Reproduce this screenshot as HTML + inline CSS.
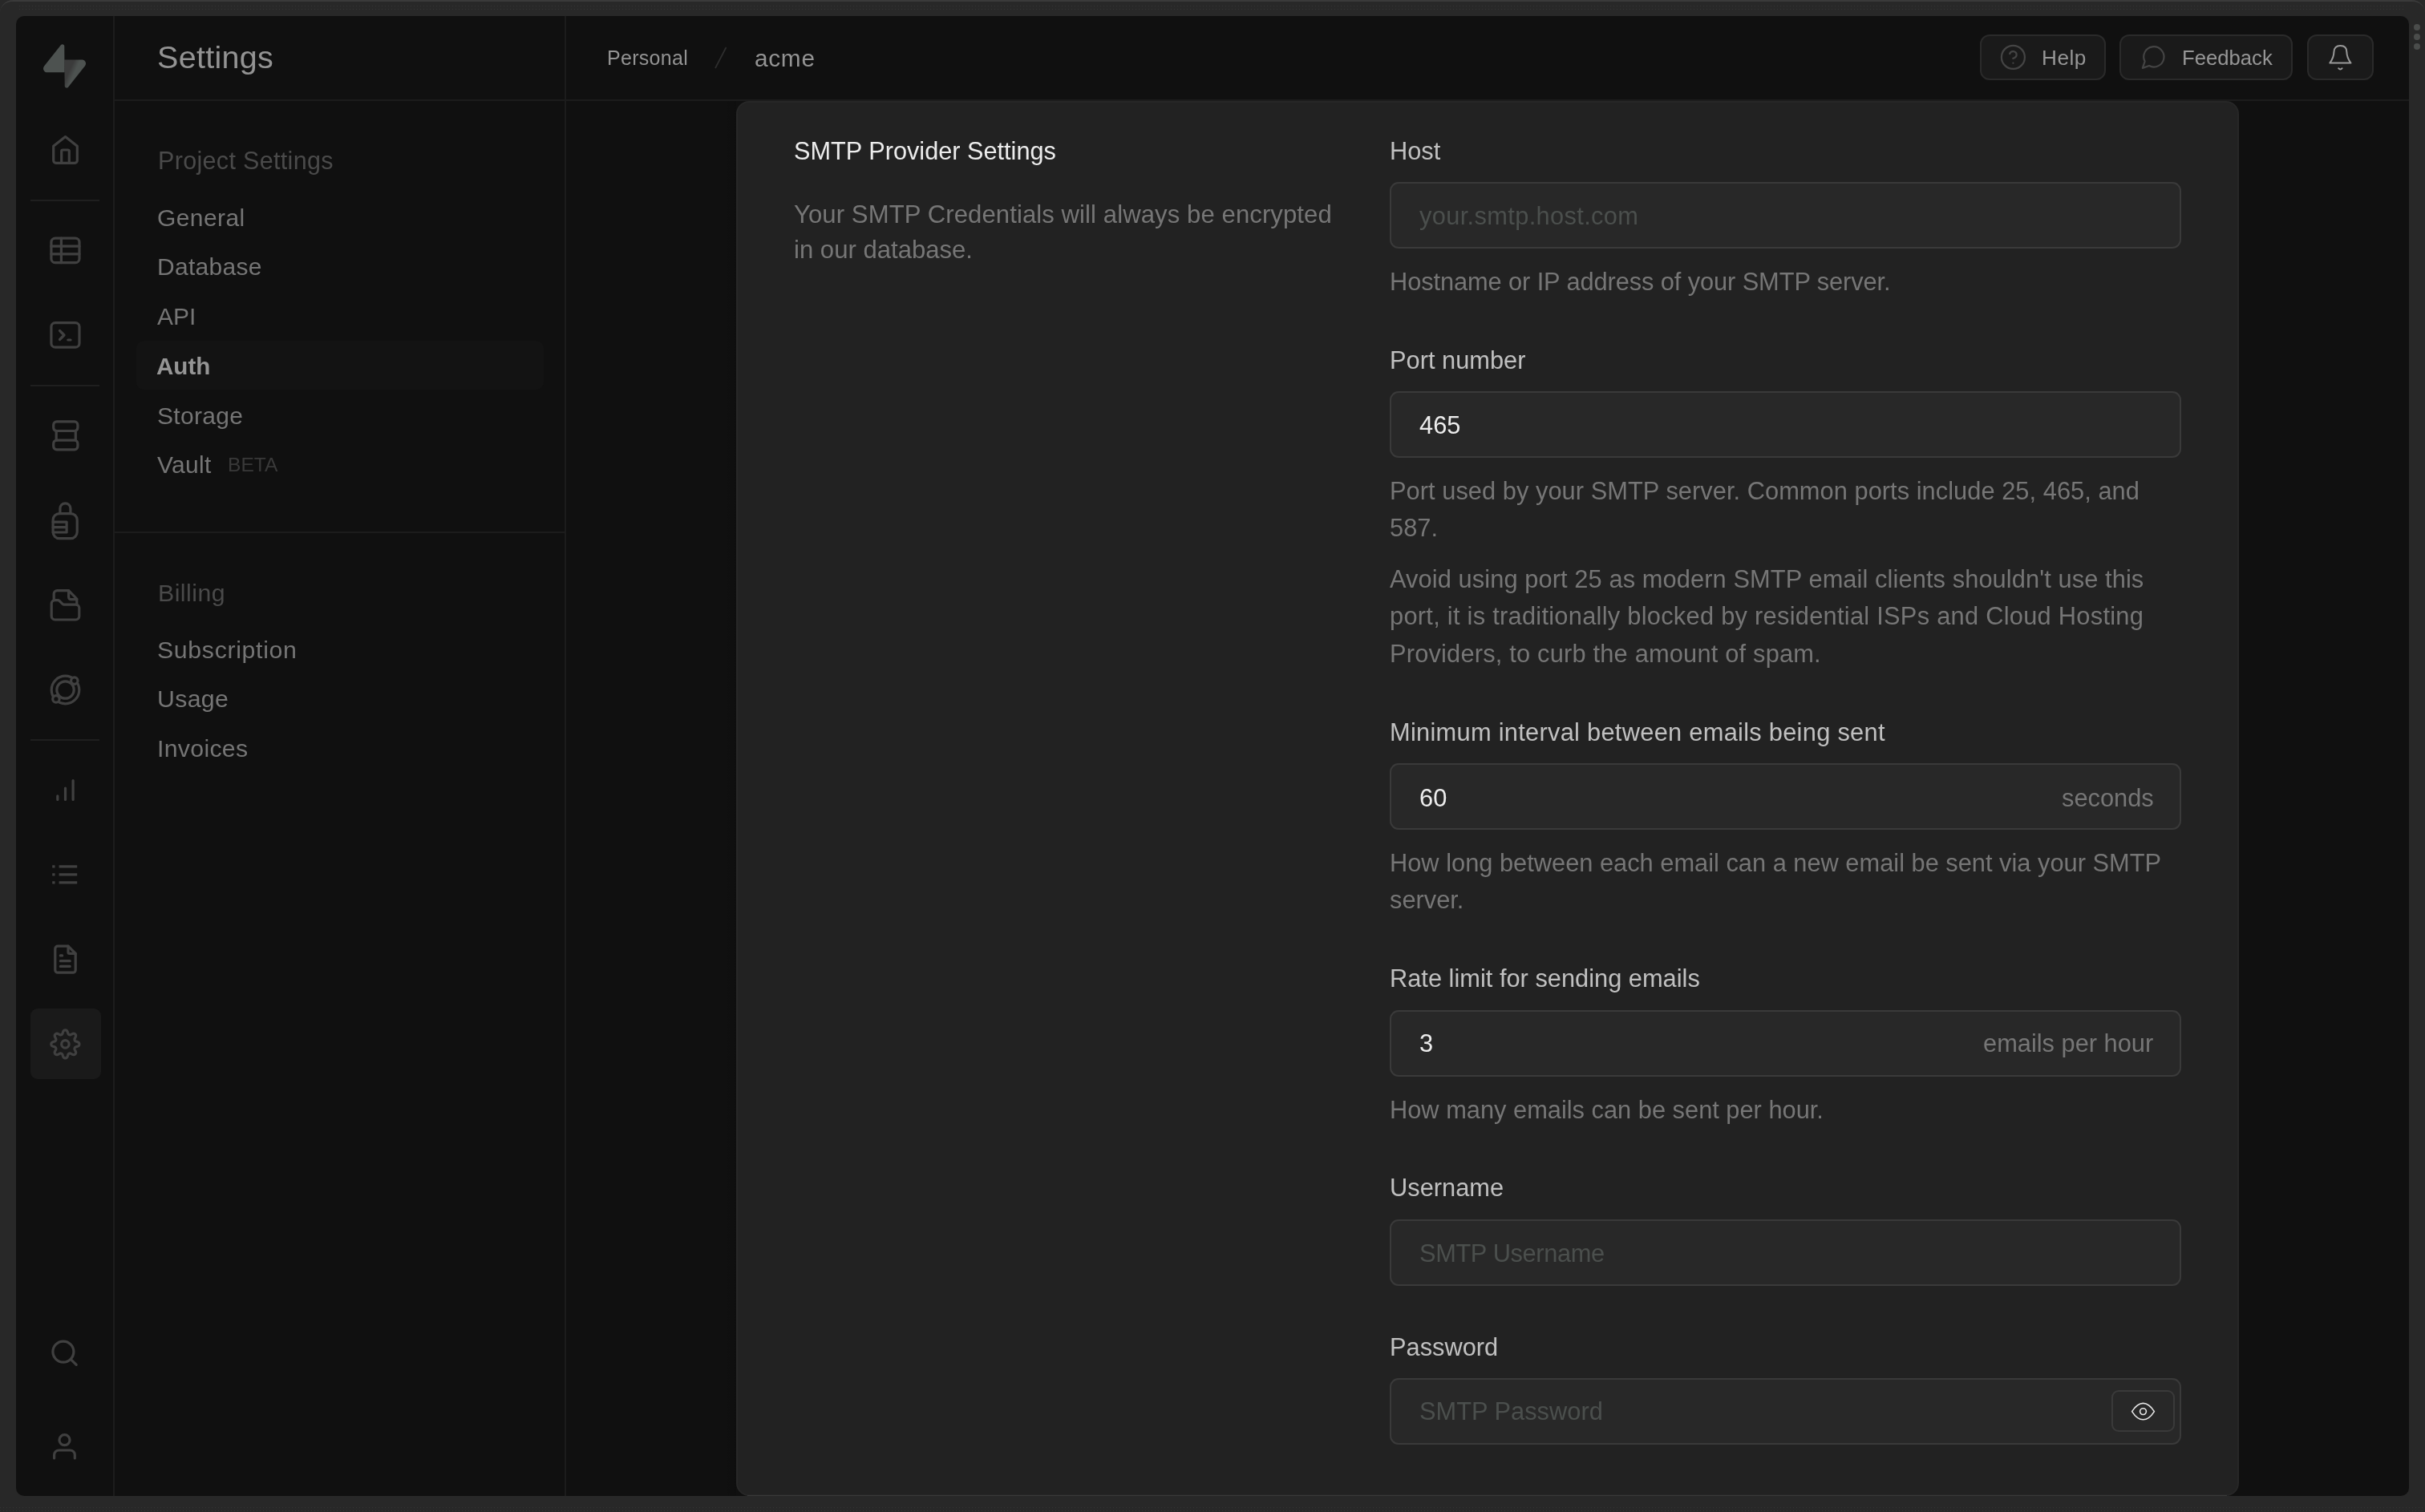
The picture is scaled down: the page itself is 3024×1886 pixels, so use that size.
<!DOCTYPE html>
<html><head><meta charset="utf-8"><title>Settings</title>
<style>
html,body{margin:0;padding:0;}
body{width:3024px;height:1886px;overflow:hidden;position:relative;background:#282828;font-family:"Liberation Sans",sans-serif;}
.t{position:absolute;white-space:nowrap;will-change:transform;}
.b{position:absolute;box-sizing:border-box;}
</style></head><body>
<div class="b" style="left:0px;top:0px;width:3024px;height:40px;border-top:2px solid #3a3a3a;border-radius:16px 16px 0 0;"></div>
<div class="b" style="left:24px;top:7px;width:2976px;height:1px;background:repeating-linear-gradient(90deg,#353535 0 1px,transparent 1px 4px);"></div>
<div class="b" style="left:24px;top:11px;width:2976px;height:1px;background:repeating-linear-gradient(90deg,#353535 0 1px,transparent 1px 4px);"></div>
<div class="b" style="left:0px;top:1880px;width:3024px;height:1px;background:repeating-linear-gradient(90deg,#353535 0 1px,transparent 1px 4px);"></div>
<div class="b" style="left:0px;top:1884px;width:3024px;height:1px;background:repeating-linear-gradient(90deg,#353535 0 1px,transparent 1px 4px);"></div>
<div class="b" style="left:20px;top:20px;width:2984px;height:1846px;background:#101010;border-radius:10px;"></div>
<div class="b" style="left:3010px;top:30px;width:8px;height:8px;background:#4a4c4b;border-radius:50%;"></div>
<div class="b" style="left:3010px;top:42px;width:8px;height:8px;background:#4a4c4b;border-radius:50%;"></div>
<div class="b" style="left:3010px;top:54px;width:8px;height:8px;background:#4a4c4b;border-radius:50%;"></div>
<div class="b" style="left:141px;top:20px;width:2px;height:1846px;background:#1c1c1c;"></div>
<div class="b" style="left:143px;top:124px;width:2861px;height:2px;background:#1c1c1c;"></div>
<div class="b" style="left:704px;top:20px;width:2px;height:1846px;background:#1c1c1c;"></div>
<div class="b" style="left:143px;top:663px;width:561px;height:2px;background:#1c1c1c;"></div>
<div class="b" style="left:38px;top:249px;width:86px;height:2px;background:#1f1f1f;"></div>
<div class="b" style="left:38px;top:480px;width:86px;height:2px;background:#1f1f1f;"></div>
<div class="b" style="left:38px;top:922px;width:86px;height:2px;background:#1f1f1f;"></div>
<div class="b" style="left:38px;top:1258px;width:88px;height:88px;background:#1a1a1a;border-radius:9px;"></div>
<div class="b" style="left:170px;top:425px;width:508px;height:61px;background:#131313;border-radius:9px;"></div>
<div class="t" style="left:196.0px;top:52.0px;font-size:39.5px;line-height:39.5px;color:#939393;font-weight:400;letter-spacing:0.3px;">Settings</div>
<div class="t" style="left:757.0px;top:60.0px;font-size:25px;line-height:25px;color:#939393;font-weight:400;letter-spacing:0.3px;">Personal</div>
<svg class="b" style="left:890px;top:58px;" width="18" height="28" viewBox="0 0 18 28" fill="none"><line x1="15.5" y1="1" x2="2" y2="27" stroke="#2e2e2e" stroke-width="1.7"/></svg>
<div class="t" style="left:941.0px;top:58.0px;font-size:29.8px;line-height:29.8px;color:#939393;font-weight:400;letter-spacing:0.7px;">acme</div>
<div class="t" style="left:197.0px;top:185.0px;font-size:30.5px;line-height:30.5px;color:#4a4a4a;font-weight:400;letter-spacing:0.33px;">Project Settings</div>
<div class="t" style="left:196.0px;top:257.0px;font-size:30px;line-height:30px;color:#757575;font-weight:400;letter-spacing:0.4px;">General</div>
<div class="t" style="left:196.0px;top:318.0px;font-size:30px;line-height:30px;color:#757575;font-weight:400;letter-spacing:0.3px;">Database</div>
<div class="t" style="left:196.0px;top:380.0px;font-size:30px;line-height:30px;color:#757575;font-weight:400;">API</div>
<div class="t" style="left:196.0px;top:504.0px;font-size:30px;line-height:30px;color:#757575;font-weight:400;letter-spacing:0.3px;">Storage</div>
<div class="t" style="left:196.0px;top:565.0px;font-size:30px;line-height:30px;color:#757575;font-weight:400;letter-spacing:0.3px;">Vault</div>
<div class="t" style="left:195.0px;top:442.0px;font-size:29.6px;line-height:29.6px;color:#959595;font-weight:700;">Auth</div>
<div class="t" style="left:284.0px;top:568.0px;font-size:24.6px;line-height:24.6px;color:#393939;font-weight:400;">BETA</div>
<div class="t" style="left:197.0px;top:725.0px;font-size:30.3px;line-height:30.3px;color:#4a4a4a;font-weight:400;letter-spacing:0.45px;">Billing</div>
<div class="t" style="left:196.0px;top:796.0px;font-size:30.3px;line-height:30.3px;color:#757575;font-weight:400;letter-spacing:0.65px;">Subscription</div>
<div class="t" style="left:196.0px;top:857.0px;font-size:30.3px;line-height:30.3px;color:#757575;font-weight:400;letter-spacing:0.3px;">Usage</div>
<div class="t" style="left:196.0px;top:919.0px;font-size:30.3px;line-height:30.3px;color:#757575;font-weight:400;letter-spacing:0.28px;">Invoices</div>
<div class="b" style="left:903px;top:126px;width:15px;height:1740px;background:linear-gradient(90deg,rgba(0,0,0,0),rgba(0,0,0,0.12));"></div>
<div class="b" style="left:918px;top:126px;width:1874px;height:1740px;background:#222222;border-radius:16px;border:2px solid #272727;"></div>
<div class="t" style="left:989.5px;top:174.0px;font-size:30.7px;line-height:30.7px;color:#ececec;font-weight:400;">SMTP Provider Settings</div>
<div class="t" style="left:989.5px;top:252.0px;font-size:31.1px;line-height:31.1px;color:#767676;font-weight:400;letter-spacing:0.08px;">Your SMTP Credentials will always be encrypted</div>
<div class="t" style="left:989.5px;top:296.0px;font-size:31.1px;line-height:31.1px;color:#767676;font-weight:400;">in our database.</div>
<div class="t" style="left:1732.5px;top:174.0px;font-size:30.8px;line-height:30.8px;color:#c0c0c0;font-weight:400;">Host</div>
<div class="b" style="left:1733px;top:227px;width:987px;height:83px;background:#282828;border:2px solid #3a3a3a;border-radius:11px;"></div>
<div class="t" style="left:1769.5px;top:255.0px;font-size:30.8px;line-height:30.8px;color:#4b4f4d;font-weight:400;letter-spacing:0.35px;">your.smtp.host.com</div>
<div class="t" style="left:1732.5px;top:337.0px;font-size:30.8px;line-height:30.8px;color:#767676;font-weight:400;letter-spacing:-0.1px;">Hostname or IP address of your SMTP server.</div>
<div class="t" style="left:1732.5px;top:435.0px;font-size:30.8px;line-height:30.8px;color:#c0c0c0;font-weight:400;">Port number</div>
<div class="b" style="left:1733px;top:488px;width:987px;height:83px;background:#282828;border:2px solid #3a3a3a;border-radius:11px;"></div>
<div class="t" style="left:1769.5px;top:516.0px;font-size:30.8px;line-height:30.8px;color:#ededed;font-weight:400;">465</div>
<div class="t" style="left:1732.5px;top:598.0px;font-size:30.8px;line-height:30.8px;color:#767676;font-weight:400;letter-spacing:0.04px;">Port used by your SMTP server. Common ports include 25, 465, and</div>
<div class="t" style="left:1732.5px;top:644.0px;font-size:30.8px;line-height:30.8px;color:#767676;font-weight:400;">587.</div>
<div class="t" style="left:1732.5px;top:708.0px;font-size:30.8px;line-height:30.8px;color:#767676;font-weight:400;letter-spacing:0.09px;">Avoid using port 25 as modern SMTP email clients shouldn't use this</div>
<div class="t" style="left:1732.5px;top:754.0px;font-size:30.8px;line-height:30.8px;color:#767676;font-weight:400;letter-spacing:0.27px;">port, it is traditionally blocked by residential ISPs and Cloud Hosting</div>
<div class="t" style="left:1732.5px;top:801.0px;font-size:30.8px;line-height:30.8px;color:#767676;font-weight:400;letter-spacing:0.19px;">Providers, to curb the amount of spam.</div>
<div class="t" style="left:1732.5px;top:899.0px;font-size:30.8px;line-height:30.8px;color:#c0c0c0;font-weight:400;letter-spacing:0.28px;">Minimum interval between emails being sent</div>
<div class="b" style="left:1733px;top:952px;width:987px;height:83px;background:#282828;border:2px solid #3a3a3a;border-radius:11px;"></div>
<div class="t" style="left:1769.5px;top:981.0px;font-size:30.8px;line-height:30.8px;color:#ededed;font-weight:400;">60</div>
<div class="t" style="right:338.5px;top:981.0px;font-size:30.8px;line-height:30.8px;color:#767676;font-weight:400;">seconds</div>
<div class="t" style="left:1732.5px;top:1062.0px;font-size:30.8px;line-height:30.8px;color:#767676;font-weight:400;">How long between each email can a new email be sent via your SMTP</div>
<div class="t" style="left:1732.5px;top:1108.0px;font-size:30.8px;line-height:30.8px;color:#767676;font-weight:400;">server.</div>
<div class="t" style="left:1732.5px;top:1206.0px;font-size:30.8px;line-height:30.8px;color:#c0c0c0;font-weight:400;">Rate limit for sending emails</div>
<div class="b" style="left:1733px;top:1260px;width:987px;height:83px;background:#282828;border:2px solid #3a3a3a;border-radius:11px;"></div>
<div class="t" style="left:1769.5px;top:1287.0px;font-size:30.8px;line-height:30.8px;color:#ededed;font-weight:400;">3</div>
<div class="t" style="right:338.5px;top:1287.0px;font-size:30.8px;line-height:30.8px;color:#767676;font-weight:400;">emails per hour</div>
<div class="t" style="left:1732.5px;top:1370.0px;font-size:30.8px;line-height:30.8px;color:#767676;font-weight:400;">How many emails can be sent per hour.</div>
<div class="t" style="left:1732.5px;top:1467.0px;font-size:30.8px;line-height:30.8px;color:#c0c0c0;font-weight:400;">Username</div>
<div class="b" style="left:1733px;top:1521px;width:987px;height:83px;background:#282828;border:2px solid #3a3a3a;border-radius:11px;"></div>
<div class="t" style="left:1769.5px;top:1549.0px;font-size:30.8px;line-height:30.8px;color:#4b4f4d;font-weight:400;letter-spacing:-0.38px;">SMTP Username</div>
<div class="t" style="left:1732.5px;top:1666.0px;font-size:30.8px;line-height:30.8px;color:#c0c0c0;font-weight:400;">Password</div>
<div class="b" style="left:1733px;top:1719px;width:987px;height:83px;background:#282828;border:2px solid #3a3a3a;border-radius:11px;"></div>
<div class="t" style="left:1769.5px;top:1746.0px;font-size:30.8px;line-height:30.8px;color:#4b4f4d;font-weight:400;">SMTP Password</div>
<div class="b" style="left:2633px;top:1734px;width:79px;height:52px;background:#282828;border:2px solid #3a3a3a;border-radius:9px;"></div>
<div class="b" style="left:932px;top:1865px;width:1845px;height:1px;background:#3a3a3a;"></div>
<div class="b" style="left:2469px;top:43px;width:157px;height:57px;background:#1a1a1a;border:2px solid #2a2a2a;border-radius:12px;"></div>
<div class="t" style="left:2546.0px;top:59.0px;font-size:26.2px;line-height:26.2px;color:#969696;font-weight:400;letter-spacing:0.5px;">Help</div>
<div class="b" style="left:2643px;top:43px;width:216px;height:57px;background:#1a1a1a;border:2px solid #2a2a2a;border-radius:12px;"></div>
<div class="t" style="left:2720.5px;top:60.0px;font-size:25.7px;line-height:25.7px;color:#969696;font-weight:400;">Feedback</div>
<div class="b" style="left:2877px;top:43px;width:83px;height:57px;background:#1a1a1a;border:2px solid #2a2a2a;border-radius:12px;"></div>
<svg class="b" style="left:54px;top:54.5px" width="53" height="55" viewBox="0 0 109 113">
<defs><linearGradient id="lg" x1="66" y1="70.5" x2="79" y2="76.3" gradientUnits="userSpaceOnUse"><stop offset="0" stop-color="#3b3b3b"/><stop offset="1" stop-color="#4d5250"/></linearGradient></defs>
<path d="M63.7076 110.284C60.8481 113.885 55.0502 111.912 54.9813 107.314L53.9738 40.0627L99.1935 40.0627C107.384 40.0627 111.952 49.5228 106.859 55.9374L63.7076 110.284Z" fill="url(#lg)"/>
<path d="M45.317 2.07103C48.1765 -1.53037 53.9745 0.442937 54.0434 5.041L54.4849 72.2922H9.83113C1.64038 72.2922 -2.92775 62.8321 2.1655 56.4175L45.317 2.07103Z" fill="#4d5250"/>
</svg>
<svg class="b" style="left:0;top:0" width="150" height="1886" viewBox="0 0 150 1886" fill="none" stroke="#404040" stroke-width="3.2" stroke-linecap="round" stroke-linejoin="round"><path d="M66.7 182.2 L81.5 170.6 L96.3 182.2 V200.3 a3 3 0 0 1 -3 3 H69.7 a3 3 0 0 1 -3 -3 Z"/><path d="M76.7 203.3 V188.6 a1.6 1.6 0 0 1 1.6 -1.6 H84.7 a1.6 1.6 0 0 1 1.6 1.6 V203.3"/><rect x="63.9" y="297.2" width="35.1" height="30.5" rx="5"/><path d="M76.4 297.2 V327.7 M63.9 307.2 H99 M63.9 316.8 H99"/><rect x="63.9" y="402.6" width="35.1" height="30.6" rx="5"/><path d="M74.5 412.5 L80 418 L74.5 423.5 M84.8 424 H88"/><rect x="66.7" y="525.9" width="30.2" height="11.6" rx="4"/><path d="M70.2 537.5 V549.2 M94.3 537.5 V549.2"/><rect x="66.7" y="549.2" width="30.2" height="11.6" rx="4"/><path d="M74.9 640.6 V634.3 a6.5 6.5 0 0 1 13 0 V640.6"/><rect x="66.1" y="640.6" width="30.1" height="31" rx="8"/><path d="M66.1 651.1 H83.1 V664 H66.1 M66.1 657.6 H83.1"/><path d="M67.2 748.5 V740.6 a4 4 0 0 1 4 -4 H85.6 L95.8 747 V753.3"/><path d="M85.6 736.6 V745 a2.6 2.6 0 0 0 2.6 2.6 H95.8"/><path d="M64.2 753 a4.4 4.4 0 0 1 4.4 -4.4 H72 a3 3 0 0 1 2.1 0.9 L78 753.3 a3 3 0 0 0 2.1 0.9 H94.4 a4.4 4.4 0 0 1 4.4 4.4 V768.6 a4.4 4.4 0 0 1 -4.4 4.4 H68.6 a4.4 4.4 0 0 1 -4.4 -4.4 Z"/><circle cx="81.5" cy="860.5" r="17.3"/><circle cx="81.5" cy="860.5" r="10.7"/><circle cx="92.8" cy="849.1" r="4.2" fill="#101010"/><circle cx="69.9" cy="871.9" r="4.2" fill="#101010"/><path d="M71.8 997.4 V992.8 M81.5 997.4 V983.1 M91.1 997.4 V973.5"/><path d="M73.6 1080.9 H96.2 M73.6 1090.8 H96.2 M73.6 1100.8 H96.2" stroke-linecap="butt"/><path d="M66.8 1080.9 h0.1 M66.8 1090.8 h0.1 M66.8 1100.8 h0.1" stroke-linecap="square"/><path d="M85 1180.2 H72 a3.2 3.2 0 0 0 -3.2 3.2 V1210 a3.2 3.2 0 0 0 3.2 3.2 H91 a3.2 3.2 0 0 0 3.2 -3.2 V1189.4 Z"/><path d="M85 1180.2 V1187.8 a1.6 1.6 0 0 0 1.6 1.6 H94.2"/><path d="M75.3 1191.9 H77.6 M75.3 1198.7 H87.2 M75.3 1205.4 H87.2"/><circle cx="78.9" cy="1686.1" r="13"/><path d="M88.6 1695.8 L95.2 1702.4"/><circle cx="80.5" cy="1796.2" r="6.5"/><path d="M67.6 1819 V1814.8 a5.8 5.8 0 0 1 5.8 -5.8 H87.5 a5.8 5.8 0 0 1 5.8 5.8 V1819"/><path d="M98.90 1302.40 L98.88 1302.74 L98.83 1303.08 L98.74 1303.42 L98.60 1303.75 L98.41 1304.07 L98.13 1304.38 L97.77 1304.66 L97.32 1304.92 L96.79 1305.15 L96.21 1305.35 L95.63 1305.52 L95.09 1305.69 L94.63 1305.85 L94.25 1306.02 L93.95 1306.21 L93.71 1306.40 L93.52 1306.60 L93.37 1306.81 L93.24 1307.03 L93.13 1307.26 L93.05 1307.49 L92.98 1307.74 L92.94 1308.00 L92.93 1308.28 L92.96 1308.58 L93.05 1308.92 L93.19 1309.31 L93.40 1309.76 L93.67 1310.25 L93.96 1310.79 L94.23 1311.34 L94.44 1311.88 L94.58 1312.38 L94.63 1312.83 L94.61 1313.24 L94.52 1313.61 L94.39 1313.94 L94.21 1314.24 L94.01 1314.52 L93.77 1314.77 L93.52 1315.01 L93.24 1315.21 L92.94 1315.39 L92.61 1315.52 L92.24 1315.61 L91.83 1315.63 L91.38 1315.58 L90.88 1315.44 L90.34 1315.23 L89.79 1314.96 L89.25 1314.67 L88.76 1314.40 L88.31 1314.19 L87.92 1314.05 L87.58 1313.96 L87.28 1313.93 L87.00 1313.94 L86.74 1313.98 L86.49 1314.05 L86.26 1314.13 L86.03 1314.24 L85.81 1314.37 L85.60 1314.52 L85.40 1314.71 L85.21 1314.95 L85.02 1315.25 L84.85 1315.63 L84.69 1316.09 L84.52 1316.63 L84.35 1317.21 L84.15 1317.79 L83.92 1318.32 L83.66 1318.77 L83.38 1319.13 L83.07 1319.41 L82.75 1319.60 L82.42 1319.74 L82.08 1319.83 L81.74 1319.88 L81.40 1319.90 L81.06 1319.88 L80.72 1319.83 L80.38 1319.74 L80.05 1319.60 L79.73 1319.41 L79.42 1319.13 L79.14 1318.77 L78.88 1318.32 L78.65 1317.79 L78.45 1317.21 L78.28 1316.63 L78.11 1316.09 L77.95 1315.63 L77.78 1315.25 L77.59 1314.95 L77.40 1314.71 L77.20 1314.52 L76.99 1314.37 L76.77 1314.24 L76.54 1314.13 L76.31 1314.05 L76.06 1313.98 L75.80 1313.94 L75.52 1313.93 L75.22 1313.96 L74.88 1314.05 L74.49 1314.19 L74.04 1314.40 L73.55 1314.67 L73.01 1314.96 L72.46 1315.23 L71.92 1315.44 L71.42 1315.58 L70.97 1315.63 L70.56 1315.61 L70.19 1315.52 L69.86 1315.39 L69.56 1315.21 L69.28 1315.01 L69.03 1314.77 L68.79 1314.52 L68.59 1314.24 L68.41 1313.94 L68.28 1313.61 L68.19 1313.24 L68.17 1312.83 L68.22 1312.38 L68.36 1311.88 L68.57 1311.34 L68.84 1310.79 L69.13 1310.25 L69.40 1309.76 L69.61 1309.31 L69.75 1308.92 L69.84 1308.58 L69.87 1308.28 L69.86 1308.00 L69.82 1307.74 L69.75 1307.49 L69.67 1307.26 L69.56 1307.03 L69.43 1306.81 L69.28 1306.60 L69.09 1306.40 L68.85 1306.21 L68.55 1306.02 L68.17 1305.85 L67.71 1305.69 L67.17 1305.52 L66.59 1305.35 L66.01 1305.15 L65.48 1304.92 L65.03 1304.66 L64.67 1304.38 L64.39 1304.07 L64.20 1303.75 L64.06 1303.42 L63.97 1303.08 L63.92 1302.74 L63.90 1302.40 L63.92 1302.06 L63.97 1301.72 L64.06 1301.38 L64.20 1301.05 L64.39 1300.73 L64.67 1300.42 L65.03 1300.14 L65.48 1299.88 L66.01 1299.65 L66.59 1299.45 L67.17 1299.28 L67.71 1299.11 L68.17 1298.95 L68.55 1298.78 L68.85 1298.59 L69.09 1298.40 L69.28 1298.20 L69.43 1297.99 L69.56 1297.77 L69.67 1297.54 L69.75 1297.31 L69.82 1297.06 L69.86 1296.80 L69.87 1296.52 L69.84 1296.22 L69.75 1295.88 L69.61 1295.49 L69.40 1295.04 L69.13 1294.55 L68.84 1294.01 L68.57 1293.46 L68.36 1292.92 L68.22 1292.42 L68.17 1291.97 L68.19 1291.56 L68.28 1291.19 L68.41 1290.86 L68.59 1290.56 L68.79 1290.28 L69.03 1290.03 L69.28 1289.79 L69.56 1289.59 L69.86 1289.41 L70.19 1289.28 L70.56 1289.19 L70.97 1289.17 L71.42 1289.22 L71.92 1289.36 L72.46 1289.57 L73.01 1289.84 L73.55 1290.13 L74.04 1290.40 L74.49 1290.61 L74.88 1290.75 L75.22 1290.84 L75.52 1290.87 L75.80 1290.86 L76.06 1290.82 L76.31 1290.75 L76.54 1290.67 L76.77 1290.56 L76.99 1290.43 L77.20 1290.28 L77.40 1290.09 L77.59 1289.85 L77.78 1289.55 L77.95 1289.17 L78.11 1288.71 L78.28 1288.17 L78.45 1287.59 L78.65 1287.01 L78.88 1286.48 L79.14 1286.03 L79.42 1285.67 L79.73 1285.39 L80.05 1285.20 L80.38 1285.06 L80.72 1284.97 L81.06 1284.92 L81.40 1284.90 L81.74 1284.92 L82.08 1284.97 L82.42 1285.06 L82.75 1285.20 L83.07 1285.39 L83.38 1285.67 L83.66 1286.03 L83.92 1286.48 L84.15 1287.01 L84.35 1287.59 L84.52 1288.17 L84.69 1288.71 L84.85 1289.17 L85.02 1289.55 L85.21 1289.85 L85.40 1290.09 L85.60 1290.28 L85.81 1290.43 L86.03 1290.56 L86.26 1290.67 L86.49 1290.75 L86.74 1290.82 L87.00 1290.86 L87.28 1290.87 L87.58 1290.84 L87.92 1290.75 L88.31 1290.61 L88.76 1290.40 L89.25 1290.13 L89.79 1289.84 L90.34 1289.57 L90.88 1289.36 L91.38 1289.22 L91.83 1289.17 L92.24 1289.19 L92.61 1289.28 L92.94 1289.41 L93.24 1289.59 L93.52 1289.79 L93.77 1290.03 L94.01 1290.28 L94.21 1290.56 L94.39 1290.86 L94.52 1291.19 L94.61 1291.56 L94.63 1291.97 L94.58 1292.42 L94.44 1292.92 L94.23 1293.46 L93.96 1294.01 L93.67 1294.55 L93.40 1295.04 L93.19 1295.49 L93.05 1295.88 L92.96 1296.22 L92.93 1296.52 L92.94 1296.80 L92.98 1297.06 L93.05 1297.31 L93.13 1297.54 L93.24 1297.77 L93.37 1297.99 L93.52 1298.20 L93.71 1298.40 L93.95 1298.59 L94.25 1298.78 L94.63 1298.95 L95.09 1299.11 L95.63 1299.28 L96.21 1299.45 L96.79 1299.65 L97.32 1299.88 L97.77 1300.14 L98.13 1300.42 L98.41 1300.73 L98.60 1301.05 L98.74 1301.38 L98.83 1301.72 L98.88 1302.06 L98.90 1302.40Z"/><circle cx="81.4" cy="1302.4" r="4.7"/></svg>
<svg class="b" style="left:2493.1px;top:54.05px" width="34.8" height="34.8" viewBox="0 0 24 24" fill="none" stroke="#444444" stroke-width="1.55" stroke-linecap="round" stroke-linejoin="round"><circle cx="12" cy="12" r="10"/><path d="M9.09 9a3 3 0 0 1 5.83 1c0 2-3 3-3 3"/><path d="M12 17h.01"/></svg>
<svg class="b" style="left:2668.6px;top:53.8px" width="33.7" height="33.7" viewBox="0 0 24 24" fill="none" stroke="#444444" stroke-width="1.55" stroke-linecap="round" stroke-linejoin="round"><path d="M7.9 20A9 9 0 1 0 4 16.1L2 22Z"/></svg>
<svg class="b" style="left:0;top:0" width="3024" height="100" viewBox="0 0 3024 100" fill="none" stroke="#9a9a9a" stroke-width="2" stroke-linecap="round" stroke-linejoin="round"><path d="M2905.3 78.6 C2909 73.5 2910.4 70 2910.4 65 C2910.4 59.7 2913.6 56.9 2918.4 56.9 C2923.2 56.9 2926.4 59.7 2926.4 65 C2926.4 70 2927.8 73.5 2931.5 78.6 Z"/><path d="M2916.2 85.2 Q2918.4 87.8 2920.6 85.2"/></svg>
<svg class="b" style="left:0;top:1700px" width="3024" height="100" viewBox="0 1700 3024 100" fill="none" stroke="#e6e6e6" stroke-width="1.6" stroke-linecap="round" stroke-linejoin="round"><path d="M2658.6 1760.6 C2662.5 1754.5 2667 1750.4 2672.5 1750.4 C2678 1750.4 2682.5 1754.5 2686.4 1760.6 C2682.5 1766.7 2678 1770.8 2672.5 1770.8 C2667 1770.8 2662.5 1766.7 2658.6 1760.6 Z"/><circle cx="2672.5" cy="1760.6" r="3.9"/></svg>
</body></html>
